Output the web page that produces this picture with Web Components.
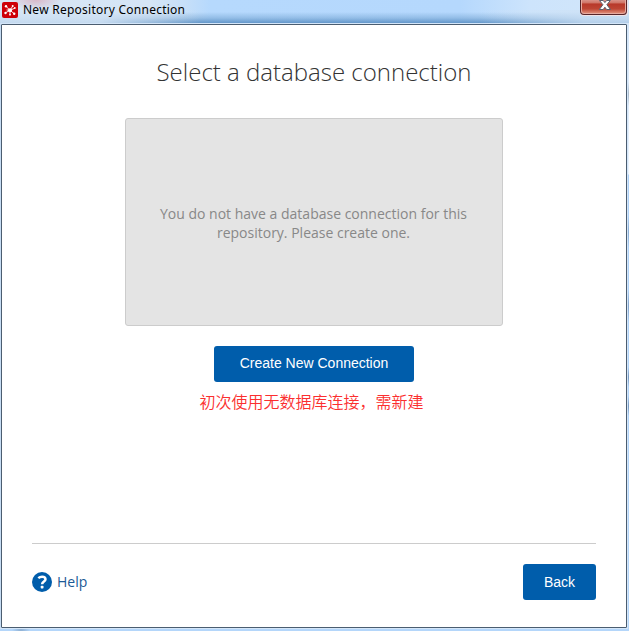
<!DOCTYPE html>
<html lang="en">
<head>
<meta charset="utf-8">
<title>New Repository Connection</title>
<style>
html,body{margin:0;height:100%;overflow:hidden}
body{font-family:"Open Sans","Noto Sans CJK SC",sans-serif}
</style>
</head>
<body>
<app-window>
  <title-bar slot="title">New Repository Connection</title-bar>
  <connection-page>
    <span slot="heading">Select a database connection</span>
    <empty-panel slot="panel">You do not have a database connection for this repository. Please create one.</empty-panel>
    <action-button slot="action" style="--w:200px">Create New Connection</action-button>
    <span slot="note" lang="zh-CN">初次使用无数据库连接，需新建</span>
    <help-link slot="footer">Help</help-link>
    <action-button slot="footer" style="--w:73px;--drop:0px">Back</action-button>
  </connection-page>
</app-window>
<script>
const define = (name, html) => {
  const t = document.createElement('template');
  t.innerHTML = html;
  customElements.define(name, class extends HTMLElement {
    constructor() {
      super();
      this.attachShadow({mode: 'open'}).append(t.content.cloneNode(true));
    }
  });
};

define('app-window', `
<style>
:host{display:grid;grid-template-rows:23px 1fr;grid-template-columns:minmax(0,1fr);width:629px;height:631px;box-sizing:border-box;padding-bottom:2px;padding-right:1px;
  background:
    radial-gradient(ellipse 9px 3px at 21px 630px,#8badd0,transparent),
    radial-gradient(ellipse 3px 12px at 629px 94px,#a4b5c6,transparent),
    radial-gradient(ellipse 3px 16px at 629px 232px,#86aad2,transparent),
    radial-gradient(ellipse 3px 16px at 629px 306px,#7d9fc8,transparent),
    radial-gradient(ellipse 3px 10px at 629px 377px,#6f92bb,transparent),
    radial-gradient(ellipse 3px 10px at 629px 406px,#6f92bb,transparent),
    linear-gradient(#cfe3f8 0,#eaf3fd 174px,#add1f8 175px,#b4d6fa 100%)}
.client{border:1px solid #d4e6f9;min-height:0;border-left-color:#c6dcf3;display:grid}
.inner{border:1px solid #4b5d70;background:#fff;display:grid;border-radius:1px}
</style>
<slot name="title"></slot>
<div class="client"><div class="inner"><slot></slot></div></div>`);

define('title-bar', `
<style>
:host{position:relative;display:flex;align-items:flex-start;width:629px;height:23px;box-sizing:border-box;padding:2px 2px 0;
  font:12px/15px "Noto Sans","Open Sans",sans-serif;color:#000;
  background:
    radial-gradient(ellipse 26px 10px at 36px 0,rgba(218,160,177,.65),transparent),
    linear-gradient(rgba(90,140,190,0) 12px,rgba(82,137,189,.35) 18px,rgba(72,129,185,.75) 23px) 0 0/100% 100%,
    linear-gradient(90deg,#d8e6f4 0,#d5e5f6 150px,#c6dff8 185px,#b6d9fd 210px,#b5d8fd 460px,#cde4fc 530px,#d2e6fa 100%)}
:host::after{content:"";position:absolute;inset:10px 0 0 auto;width:150px;background:linear-gradient(90deg,rgba(205,225,245,0),rgba(205,225,245,.75) 70%)}
:host::before{content:"";position:absolute;inset:10px auto 0 0;width:200px;background:linear-gradient(90deg,rgba(212,229,246,.85) 50%,rgba(212,229,246,0))}
svg{flex:none}
.logo,.text{position:relative}
.text{margin:-.5px 0 0 5px;white-space:nowrap;letter-spacing:.25px}
.close{position:absolute;right:1px;top:0;z-index:1}
</style>
<svg class="logo" width="16" height="16" viewBox="0 0 16 16">
  <rect width="16" height="16" rx="2" fill="#ce0008"/>
  <g stroke="#fff" stroke-width=".9" stroke-linecap="round"><path d="M8 8.3 4 4.3M8 8.3 10.6 4.3M8 8.3l4.5-2M8 8.3l4 3.2M8 8.3v4M8 8.3 3.5 10.8M8 8.3 5 8"/></g>
  <g fill="#fff"><circle cx="8" cy="8.3" r="2"/><circle cx="4" cy="4.3" r="1.2"/><circle cx="10.7" cy="4" r="1"/><circle cx="12.8" cy="6" r=".9"/><circle cx="12.2" cy="11.7" r="1.2"/><circle cx="8" cy="12.7" r=".9"/><circle cx="3.5" cy="11" r="1.2"/></g>
</svg>
<span class="text"><slot></slot></span>
<svg class="close" width="48" height="16" viewBox="0 0 48 16">
  <defs><linearGradient id="r" x2="0" y2="1"><stop offset="0" stop-color="#dc9c94"/><stop offset=".3" stop-color="#ce7163"/><stop offset=".34" stop-color="#b8382a"/><stop offset=".7" stop-color="#bd4534"/><stop offset="1" stop-color="#dd8874"/></linearGradient></defs>
  <path d="M0-1V12Q0 16 4 16H44Q48 16 48 12V-1" fill="#f1e2e6"/>
  <path d="M0-1V11Q0 15 4 15H43.5Q47 15 47 11V-1Z" fill="#57252a"/>
  <path d="M1-1V11Q1 14 4 14H43Q46 14 46 11V-1Z" fill="#e7aaa0"/>
  <path d="M2-1V11Q2 13 4 13H43Q45 13 45 11V-1Z" fill="url(#r)"/>
  <path d="M19.500.5h3.700l1.700 2.100 1.700-2.100h3.700l-3.400 4.200 3.600 4.800h-3.900l-1.700-2.300-1.700 2.300h-3.900l3.600-4.800Z" fill="#fff" stroke="#59606e" stroke-width="1"/>
</svg>`);

define('connection-page', `
<style>
:host{display:flex;flex-direction:column;align-items:center;box-sizing:border-box;padding:29px 30px 27px;min-height:0}
h1{margin:0;font:300 24px/36px "Open Sans",sans-serif;color:#333;white-space:nowrap}
.panel{margin-top:28px}
.action{margin-top:20px}
.note{margin:7px 5px 0 0;font:16px/24px "Noto Sans CJK SC",sans-serif;font-weight:350;color:#fb2f2f;white-space:nowrap}
footer{margin-top:auto;align-self:stretch;border-top:1px solid #ccc;padding-top:20px;display:flex;justify-content:space-between;align-items:center}
</style>
<h1><slot name="heading"></slot></h1>
<div class="panel"><slot name="panel"></slot></div>
<div class="action"><slot name="action"></slot></div>
<div class="note"><slot name="note"></slot></div>
<footer><slot name="footer"></slot></footer>`);

define('empty-panel', `
<style>
:host{display:flex;align-items:center;justify-content:center;box-sizing:border-box;width:378px;height:208px;padding:2px 31px 0 30px;border:1px solid #ccc;border-radius:3px;background:#e4e4e4;color:#888;font:14px/19px "Open Sans",sans-serif;text-align:center}
</style>
<div><slot></slot></div>`);

define('action-button', `
<style>
:host{display:block;width:var(--w)}
button{display:block;width:100%;height:36px;border:0;border-radius:3px;padding:0 0 var(--drop,2px);background:#005dab;color:#fff;font:14px/20px "Liberation Sans",sans-serif;white-space:nowrap}
</style>
<button><slot></slot></button>`);

define('help-link', `
<style>
:host{display:flex;align-items:center;gap:5px;color:#1c5a96;font:14px/20px "Open Sans",sans-serif}
svg{flex:none}
</style>
<svg width="20" height="20" viewBox="0 0 20 20"><circle cx="10" cy="10" r="10" fill="#005dab"/><path d="M6.300 6.200C7.400 5.200 8.600 4.700 10.100 4.700 12.300 4.700 13.500 5.800 13.500 7.300 13.500 9.500 10.100 9.500 10.100 12.200" fill="none" stroke="#fff" stroke-width="2.500"/><rect x="8.700" y="13.700" width="2.800" height="2.800" rx=".7" fill="#fff"/></svg>
<span><slot></slot></span>`);
</script>
</body>
</html>
